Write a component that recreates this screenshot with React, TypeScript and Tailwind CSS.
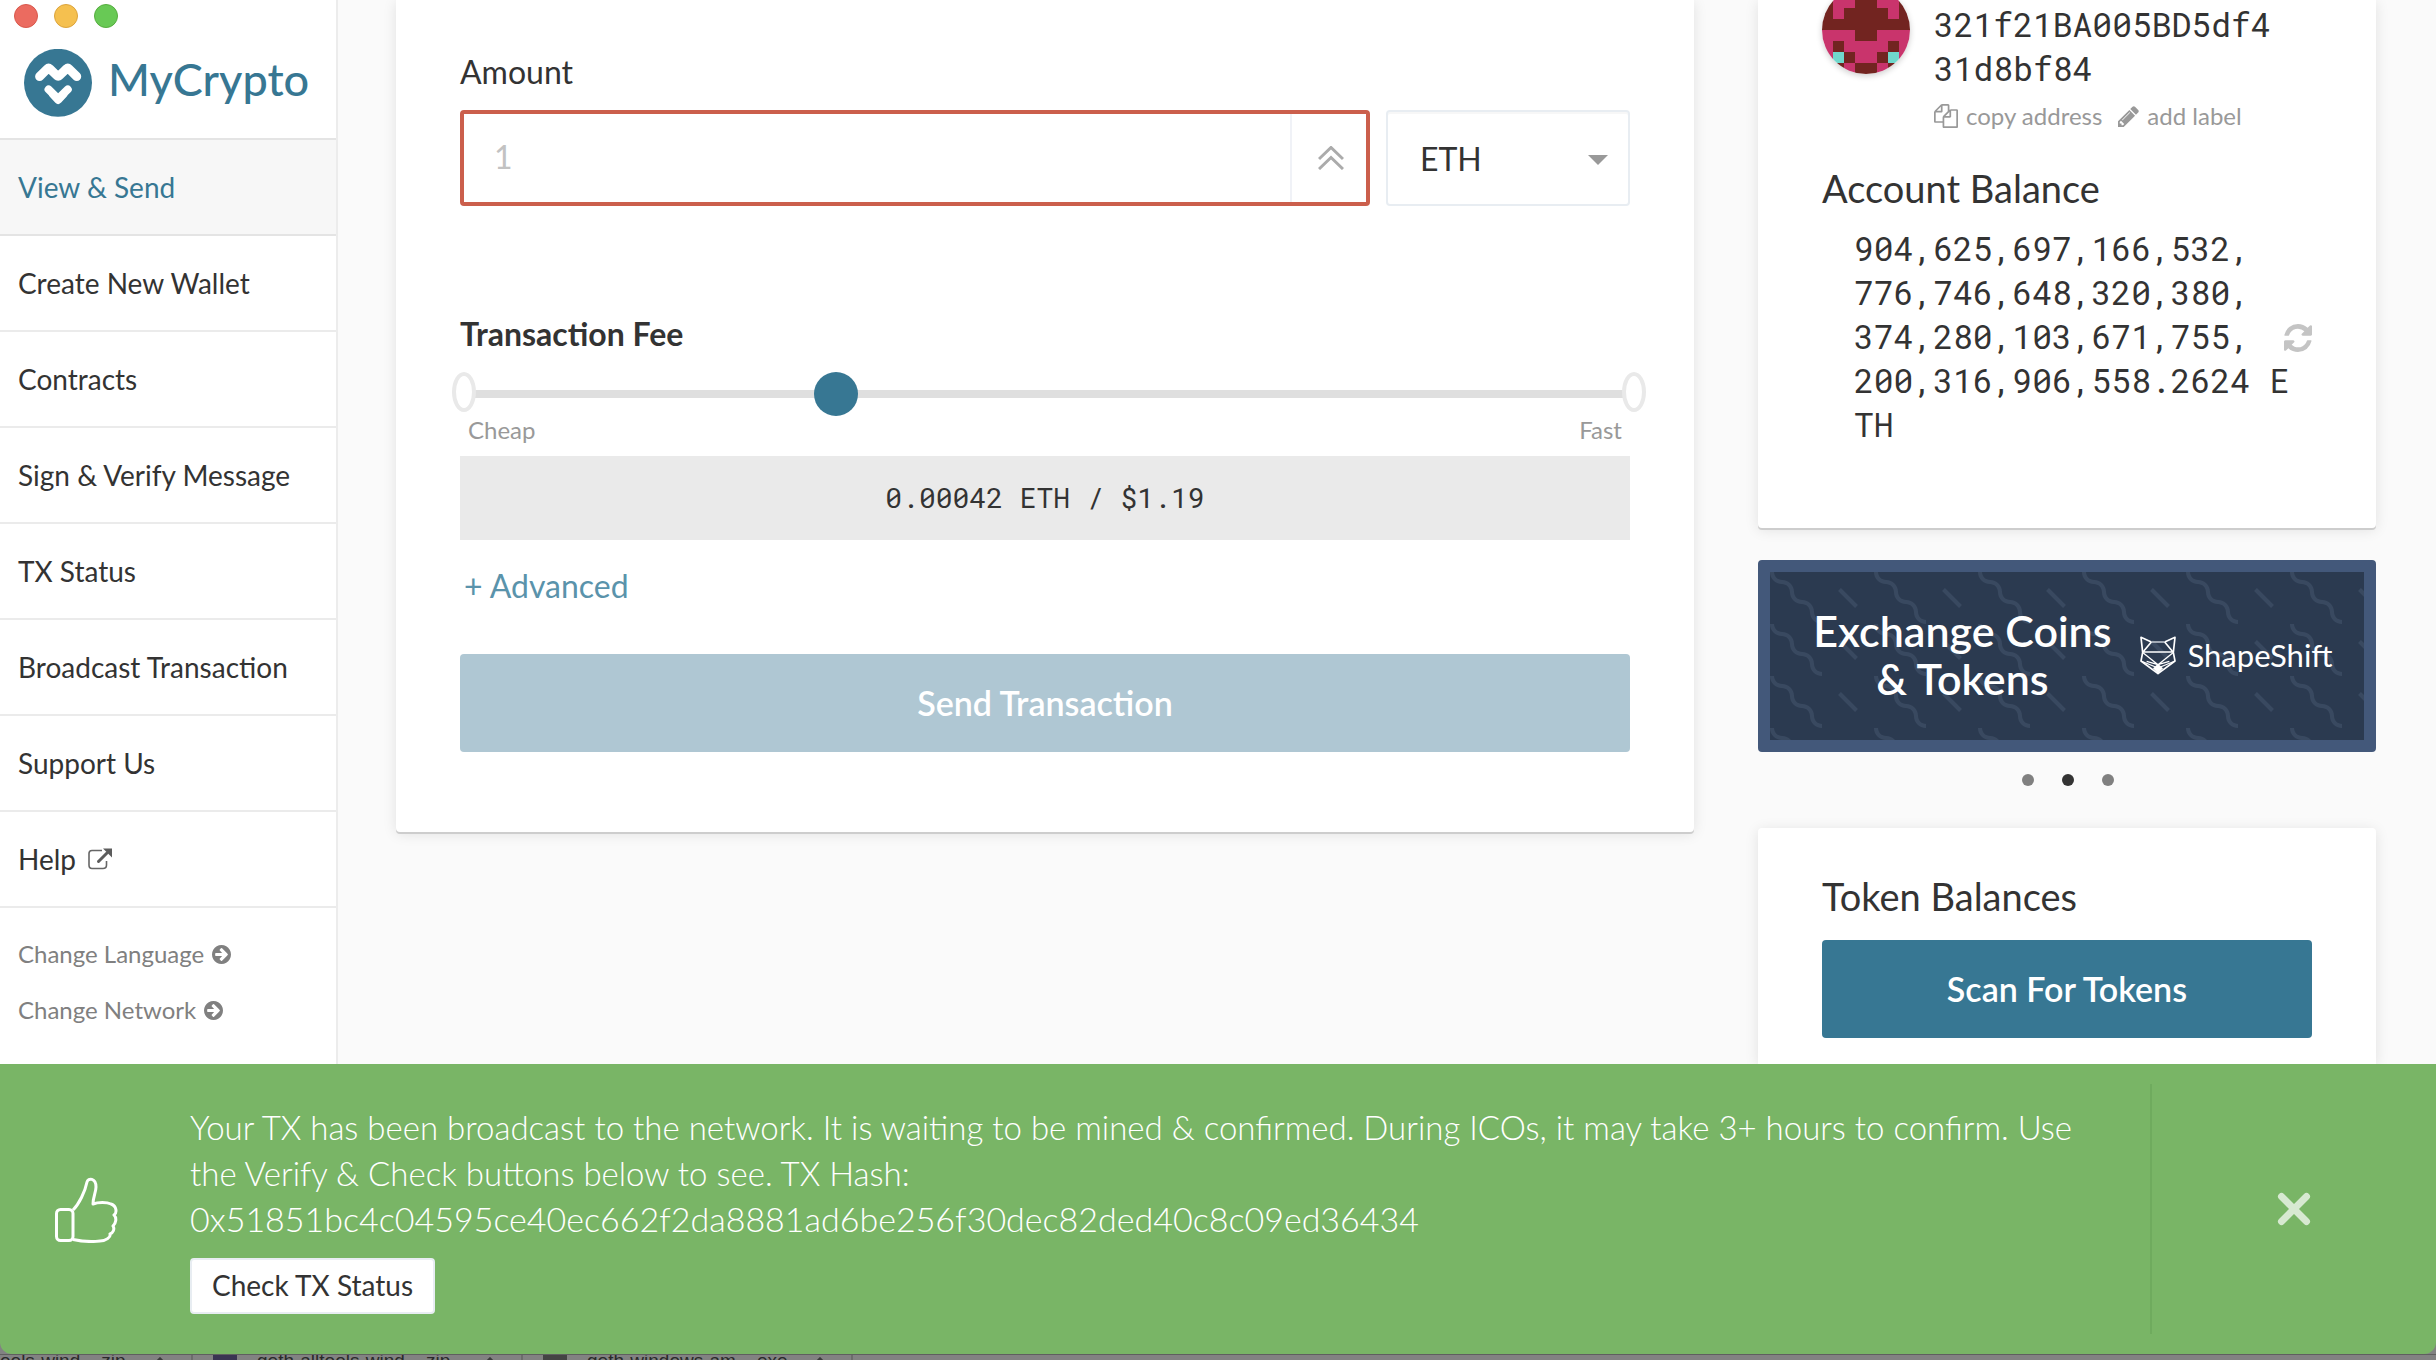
import React from "react";

const LINK_ITEMS = [
  "View & Send",
  "Create New Wallet",
  "Contracts",
  "Sign & Verify Message",
  "TX Status",
  "Broadcast Transaction",
  "Support Us",
  "Help",
];

const BALANCE_LINES = [
  "904,625,697,166,532,",
  "776,746,648,320,380,",
  "374,280,103,671,755,",
  "200,316,906,558.2624 E",
  "TH",
];

const CARD =
  "bg-white shadow-[0_2px_0_0_#cdcdcd,0_2px_14px_0_rgba(0,0,0,0.1)]";

function BrandMark() {
  return (
    <svg viewBox="71 147 205 205" className="size-17 shrink-0" aria-hidden="true">
      <circle cx="173.500" cy="249" r="102.500" fill="#377793" />
      <g fill="none" stroke="#fff" strokeLinecap="round" strokeLinejoin="round">
        <path d="M118 230 L142 206 Q145 203 148 206 L171 228 Q174 231 177 228 L200 206 Q203 203 206 206 L230 230" strokeWidth="27" />
        <path d="M145 269 L171 294 Q174 297 177 294 L203 269" strokeWidth="24" />
        <path d="M158 284 L174 301 L190 284" strokeWidth="23" />
      </g>
    </svg>
  );
}

function ExternalIcon() {
  return (
    <svg viewBox="0 0 24 22" className="h-[22px] w-6" fill="none" aria-hidden="true">
      <path d="M14 2.500 H4 Q1 2.500 1 5.500 V17 Q1 20.500 4 20.500 H15 Q18.500 20.500 18.500 17 V13" stroke="#666" strokeWidth="1.600" />
      <path d="M10.500 13.500 L19 5" stroke="#5c5c5c" strokeWidth="3" strokeLinecap="round" />
      <path d="M15 0.500 H24 V9.500 Z" fill="#5c5c5c" />
    </svg>
  );
}

function ArrowCircleIcon() {
  return (
    <svg viewBox="128 128 1536 1536" className="size-[19px]" fill="currentColor" aria-hidden="true">
      <path d="M1413 896q0-27-18-45l-91-91-362-362q-18-18-45-18t-45 18l-91 91q-18 18-18 45t18 45l189 189h-502q-26 0-45 19t-19 45v128q0 26 19 45t45 19h502l-189 189q-18 18-18 45t18 45l91 91q18 18 45 18t45-18l362-362 91-91q18-18 18-45zm251 0q0 209-103 385.500t-279.500 279.500-385.500 103-385.500-103-279.500-279.500-103-385.500 103-385.500 279.500-279.500 385.500-103 385.500 103 279.500 279.500 103 385.500z" />
    </svg>
  );
}

function CopyIcon() {
  return (
    <svg viewBox="0 0 1792 1792" className="size-6" fill="currentColor" aria-hidden="true">
      <path d="M1696 384q40 0 68 28t28 68v1216q0 40-28 68t-68 28h-960q-40 0-68-28t-28-68v-288h-544q-40 0-68-28t-28-68v-672q0-40 20-88t48-76l408-408q28-28 76-48t88-20h416q40 0 68 28t28 68v328q68-40 128-40h416zm-544 213l-299 299h299v-299zm-640-384l-299 299h299v-299zm196 647l316-316v-416h-384v416q0 40-28 68t-68 28h-416v640h512v-256q0-40 20-88t48-76zm956 804v-1152h-384v416q0 40-28 68t-68 28h-416v640h896z" />
    </svg>
  );
}

function PencilIcon() {
  return (
    <svg viewBox="128 128 1536 1536" className="size-[21px]" fill="currentColor" aria-hidden="true">
      <path d="M491 1536l91-91-235-235-91 91v107h128v128h107zm523-928q0-22-22-22-10 0-17 7l-542 542q-7 7-7 17 0 22 22 22 10 0 17-7l542-542q7-7 7-17zm-54-192l416 416-832 832h-416v-416zm683 96q0 53-37 90l-166 166-416-416 166-165q36-38 90-38 53 0 91 38l235 234q37 39 37 91z" />
    </svg>
  );
}

function RefreshIcon() {
  return (
    <svg viewBox="128 128 1536 1536" className="size-7" fill="#c4c4c4" aria-hidden="true">
      <path d="M1639 1056q0 5-1 7-64 268-268 434.500t-478 166.500q-146 0-282.500-55t-243.500-157l-129 129q-19 19-45 19t-45-19-19-45v-448q0-26 19-45t45-19h448q26 0 45 19t19 45-19 45l-137 137q71 66 161 102t187 36q134 0 250-65t186-179q11-17 53-117 8-23 30-23h192q13 0 22.500 9.500t9.500 22.500zm25-800v448q0 26-19 45t-45 19h-448q-26 0-45-19t-19-45 19-45l138-138q-148-137-349-137-134 0-250 65t-186 179q-11 17-53 117-8 23-30 23h-199q-13 0-22.500-9.500t-9.500-22.500v-7q65-268 270-434.500t480-166.500q146 0 284 55.500t245 156.500l130-129q19-19 45-19t45 19 19 45z" />
    </svg>
  );
}

const IDENTICON_ROWS = [
  "dddddddd",
  "dppddppd",
  "dpddddpd",
  "dddddddd",
  "pppddppp",
  "pdppppdp",
  "ptdppdtp",
  "pdpddpdp",
];
const IDENTICON_COLORS: Record<string, string> = { d: "#722420", p: "#c9346c", t: "#70d8cc" };

function Identicon() {
  return (
    <svg
      viewBox="0 0 8 8"
      shapeRendering="crispEdges"
      className="-mt-3.5 size-22 shrink-0 rounded-full shadow-[0_2px_6px_rgba(0,0,0,0.2)]"
      role="img"
      aria-label="Address identicon"
    >
      {IDENTICON_ROWS.flatMap((row, y) =>
        row.split("").map((cell, x) => (
          <rect key={`${x}-${y}`} x={x} y={y} width="1" height="1" fill={IDENTICON_COLORS[cell]} />
        )),
      )}
    </svg>
  );
}

function FoxIcon() {
  return (
    <svg viewBox="0 0 108 117" className="h-[39px] w-9 shrink-0" fill="none" stroke="#fff" strokeWidth="5" strokeLinejoin="round" aria-hidden="true">
      <path d="M34 18 L3 4 L8 49 L3 75 L54 113 L105 75 L100 49 L105 4 L74 18" />
      <path d="M34 18 H74" stroke="#b9c0c9" />
      <path d="M34 18 L9 48 H99 L74 18" />
      <path d="M9 50 L54 86 L99 50 M3 75 L54 96 L105 75 M54 86 L20 76 M54 86 L88 76" strokeWidth="4" />
      <path d="M40 97 L54 84 L68 97 L54 113 Z" fill="#fff" strokeWidth="2" />
    </svg>
  );
}

function ThumbsUpIcon() {
  return (
    <svg viewBox="0 0 64 66" className="h-[66px] w-16" fill="none" stroke="#fff" strokeWidth="3" strokeLinejoin="round" aria-hidden="true">
      <rect x="2.500" y="32.500" width="16.500" height="31" rx="4" />
      <path d="M19 33 C25 27 31 15 33 5 C34 0.500 42 1 42 10 C42 15 39 20 39 27 C44 25 53 25 57 27 C63 29 63 36 60 38 C63 41 62 46 59 49 C61 52 59 56 56 57 C57 60 52 64 46 64 C38 65 26 64 19 62.500" />
    </svg>
  );
}

function Sidebar() {
  return (
    <aside className="w-[338px] shrink-0 border-r-2 border-[#ececec] bg-white">
      <header className="h-[140px] border-b-2 border-[#e4e4e4]">
        <div className="flex gap-4 pt-1 pl-3.5">
          <button aria-label="Close window" className="size-6 rounded-full border border-[#d9584c] bg-[#eb6b60]" />
          <button aria-label="Minimize window" className="size-6 rounded-full border border-[#dca43c] bg-[#f5c04f]" />
          <button aria-label="Zoom window" className="size-6 rounded-full border border-[#56ad3f] bg-[#68c955]" />
        </div>
        <a href="#home" className="mt-[21px] ml-6 flex items-center gap-4 text-[45px] leading-17 font-medium text-[#377793]">
          <BrandMark />
          <span className="-mt-2">MyCrypto</span>
        </a>
      </header>
      <nav>
        {LINK_ITEMS.map((item, i) => (
          <a
            key={item}
            href="#nav"
            className={
              i === 0
                ? "flex h-24 items-center border-b-2 border-[#e4e4e4] bg-[#f7f7f7] pl-[18px] text-[28px] text-[#377793]"
                : "flex h-24 items-center gap-3 border-b-2 border-[#ebebeb] pl-[18px] text-[28px]"
            }
          >
            {item}
            {item === "Help" && <ExternalIcon />}
          </a>
        ))}
        <div className="flex flex-col items-start pt-[18px] pl-[18px] text-2xl text-[#808080]">
          <button className="flex h-14 items-center gap-2">Change Language <ArrowCircleIcon /></button>
          <button className="flex h-14 items-center gap-2">Change Network <ArrowCircleIcon /></button>
        </div>
      </nav>
    </aside>
  );
}

function SendForm() {
  return (
    <form className={`${CARD} flex flex-col self-start rounded-b px-16 pt-[50px] pb-20`}>
      <label htmlFor="amount" className="text-[32px] leading-11">Amount</label>
      <div className="mt-4 flex gap-4">
        <div className="flex h-24 min-w-0 flex-1 rounded border-4 border-[#cb5f4c]">
          <input
            id="amount"
            placeholder="1"
            className="min-w-0 flex-1 px-[30px] pb-0.5 text-[32px] outline-none placeholder:text-[#c2c2c2]"
          />
          <button type="button" aria-label="Send entire balance" className="flex w-[76px] items-center justify-center border-l-2 border-[#f0f2f7] pl-1">
            <svg viewBox="0 0 26 24" className="h-6 w-[26px]" fill="none" stroke="#ababab" strokeWidth="3" aria-hidden="true">
              <path d="M1 13 L13 1.500 L25 13 M1 23 L13 11.500 L25 23" />
            </svg>
          </button>
        </div>
        <div className="grid w-61 shrink-0">
          <select aria-label="Unit" className="col-start-1 row-start-1 appearance-none rounded border-2 border-[#e8edf2] bg-white pt-0.5 pl-8 text-[32px] shadow-[inset_0_2px_0_#f7f7f7] outline-none">
            <option>ETH</option>
          </select>
          <svg viewBox="0 0 20 10" className="pointer-events-none col-start-1 row-start-1 mt-1 mr-[22px] h-2.5 w-5 self-center justify-self-end" aria-hidden="true">
            <path d="M0 0 H20 L10 10 Z" fill="#999" />
          </svg>
        </div>
      </div>

      <label htmlFor="fee" className="mt-[106px] text-[32px] leading-11 font-bold">Transaction Fee</label>
      <div className="relative mt-4 h-11">
        <input
          id="fee"
          type="range"
          min={0}
          max={70}
          defaultValue={22}
          className="relative z-10 block h-11 w-full appearance-none bg-transparent [&::-webkit-slider-runnable-track]:h-2 [&::-webkit-slider-runnable-track]:bg-[#dfdfdf] [&::-webkit-slider-thumb]:-mt-[18px] [&::-webkit-slider-thumb]:size-11 [&::-webkit-slider-thumb]:appearance-none [&::-webkit-slider-thumb]:rounded-full [&::-webkit-slider-thumb]:bg-[#377793]"
        />
        <span className="absolute top-0 -left-2 z-20 h-10 w-6 rounded-[50%] border-4 border-[#e9e9e9] bg-white" />
        <span className="absolute top-0 -right-4 z-20 h-10 w-6 rounded-[50%] border-4 border-[#e9e9e9] bg-white" />
      </div>
      <div className="flex justify-between px-2 text-2xl leading-7 text-[#999]">
        <span>Cheap</span>
        <span>Fast</span>
      </div>
      <output htmlFor="fee" className="mt-3 bg-[#eaeaea] text-center font-['Roboto_Mono','Liberation_Mono',monospace] text-[28px] leading-[84px]">
        0.00042 ETH / $1.19
      </output>
      <button type="button" className="mt-6 self-start pl-1 text-[32px] leading-11 text-[#5a93ab]">+ Advanced</button>
      <button type="button" className="mt-[46px] h-[98px] rounded bg-[#afc7d3] pb-0.5 text-[34px] font-semibold text-white">
        Send Transaction
      </button>
    </form>
  );
}

function AccountCard() {
  return (
    <section className={`${CARD} rounded-b px-16 pb-[82px]`}>
      <div className="flex gap-6">
        <Identicon />
        <div className="pt-0.5">
          <p className="font-['Roboto_Mono','Liberation_Mono',monospace] text-[33px] leading-11 whitespace-nowrap">
            321f21BA005BD5df4
            <br />
            31d8bf84
          </p>
          <div className="mt-2.5 flex items-center gap-4 text-2xl leading-8 text-[#999]">
            <button className="flex items-center gap-2"><CopyIcon />copy address</button>
            <button className="flex items-center gap-2"><PencilIcon />add label</button>
          </div>
        </div>
      </div>
      <h2 className="mt-[34px] text-[38px] leading-11">Account Balance</h2>
      <div className="mt-4 flex items-center pl-8">
        <p className="min-w-0 flex-1 font-['Roboto_Mono','Liberation_Mono',monospace] text-[33px] leading-11 whitespace-nowrap">
          {BALANCE_LINES.map((line) => (
            <span key={line} className="block">{line}</span>
          ))}
        </p>
        <button aria-label="Refresh balance" className="pt-1"><RefreshIcon /></button>
      </div>
    </section>
  );
}

function ExchangeBanner() {
  return (
    <a href="#exchange" className="relative mt-8 flex h-48 items-center justify-center gap-7 overflow-hidden rounded border-12 border-[#43587a] bg-[#2b3a50] pb-0.5 pl-3 text-white">
      <svg className="absolute inset-0 size-full" aria-hidden="true">
        <defs>
          <pattern id="wiggle" width="104" height="52" patternUnits="userSpaceOnUse">
            <path
              transform="scale(2)"
              fill="#394960"
              d="M10 10c0-2.210-1.790-4-4-4-3.314 0-6-2.686-6-6h2c0 2.210 1.790 4 4 4 3.314 0 6 2.686 6 6 0 2.210 1.790 4 4 4 3.314 0 6 2.686 6 6 0 2.210 1.790 4 4 4v2c-3.314 0-6-2.686-6-6 0-2.210-1.790-4-4-4-3.314 0-6-2.686-6-6zm25.464-1.950l8.486 8.486-1.414 1.414-8.486-8.486 1.414-1.414z"
            />
          </pattern>
        </defs>
        <rect width="100%" height="100%" fill="url(#wiggle)" />
      </svg>
      <span className="relative text-center text-[43px] leading-12 font-semibold whitespace-nowrap">
        Exchange Coins
        <br />
        &amp; Tokens
      </span>
      <span className="relative flex items-center gap-3 text-[31px]">
        <FoxIcon />
        ShapeShift
      </span>
    </a>
  );
}

function Toast() {
  return (
    <div role="status" className="flex rounded-b-xl bg-[#79b566] text-white">
      <div className="flex w-[190px] shrink-0 items-center pt-[2px] pl-[54px]">
        <ThumbsUpIcon />
      </div>
      <div className="min-w-0 flex-1 py-10 pr-8">
        <p className="text-[33px] leading-[46px] font-light">
          Your TX has been broadcast to the network. It is waiting to be mined &amp; confirmed. During ICOs, it may take 3+ hours to confirm. Use the Verify &amp; Check buttons below to see. TX Hash:{" "}
          <span className="block text-[34px]">0x51851bc4c04595ce40ec662f2da8881ad6be256f30dec82ded40c8c09ed36434</span>
        </p>
        <button className="mt-4 block h-14 rounded border-2 border-[#e8edf2] bg-white px-5 pb-0.5 text-[28px] text-[#333]">
          Check TX Status
        </button>
      </div>
      <div className="my-5 flex w-[286px] shrink-0 items-center justify-center border-l-2 border-[#6fab5e]">
        <button aria-label="Dismiss">
          <svg viewBox="0 0 34 34" className="size-[34px]" stroke="#d7e9d1" strokeWidth="7" strokeLinecap="round" aria-hidden="true">
            <path d="M4.500 4.500 L29.500 29.500 M29.500 4.500 L4.500 29.500" />
          </svg>
        </button>
      </div>
    </div>
  );
}

function DownloadItem({ name, icon, className }: { name: string; icon?: string; className: string }) {
  return (
    <div className={`flex shrink-0 items-start border-r-2 border-[#6c6c6c] ${className}`}>
      {icon && <span className={`mr-5 h-4 w-6 shrink-0 ${icon}`} />}
      <span className="flex-1">{name}</span>
      <svg viewBox="0 0 14 8" className="mt-0.5 mr-6 h-2 w-3.5" fill="none" stroke="#3c3c3c" strokeWidth="3" aria-hidden="true">
        <path d="M1 8 L7 2 L13 8" />
      </svg>
    </div>
  );
}

function DownloadsShelf() {
  return (
    <div className="flex h-1.5 overflow-hidden border-t border-[#5f5f5f] bg-[#828282] font-['Liberation_Sans',sans-serif] text-[19px] leading-3 whitespace-nowrap text-[#2a2a2a]">
      <DownloadItem name="ools-wind....zip" className="w-[193px]" />
      <DownloadItem name="geth-alltools-wind....zip" icon="bg-[#3a3552]" className="w-[330px] pl-5" />
      <DownloadItem name="geth-windows-am....exe" icon="bg-[#444]" className="w-[330px] pl-5" />
    </div>
  );
}

export default function App() {
  return (
    <div className="flex h-screen flex-col overflow-hidden bg-[#828282] font-[Lato,sans-serif] text-[#333]">
      <div className="flex min-h-0 flex-1 overflow-hidden bg-[#fafafa]">
        <Sidebar />
        <main className="grid min-w-0 flex-1 grid-cols-[minmax(0,21fr)_minmax(0,10fr)] gap-16 pr-15 pl-[58px]">
          <SendForm />
          <div className="flex flex-col">
            <AccountCard />
            <ExchangeBanner />
            <div className="flex h-19 shrink-0 items-start justify-center gap-7 pt-[22px] pl-0.5">
              <button aria-label="Slide 1" className="size-3 rounded-full bg-[#808080]" />
              <button aria-label="Slide 2" className="size-3 rounded-full bg-[#333]" />
              <button aria-label="Slide 3" className="size-3 rounded-full bg-[#808080]" />
            </div>
            <section className={`${CARD} flex flex-1 flex-col rounded-t px-16 pt-[46px]`}>
              <h2 className="text-[38px] leading-11">Token Balances</h2>
              <button className="mt-[22px] h-[98px] shrink-0 rounded bg-[#377793] pb-0.5 text-[34px] font-semibold text-white">
                Scan For Tokens
              </button>
            </section>
          </div>
        </main>
      </div>
      <Toast />
      <DownloadsShelf />
    </div>
  );
}
